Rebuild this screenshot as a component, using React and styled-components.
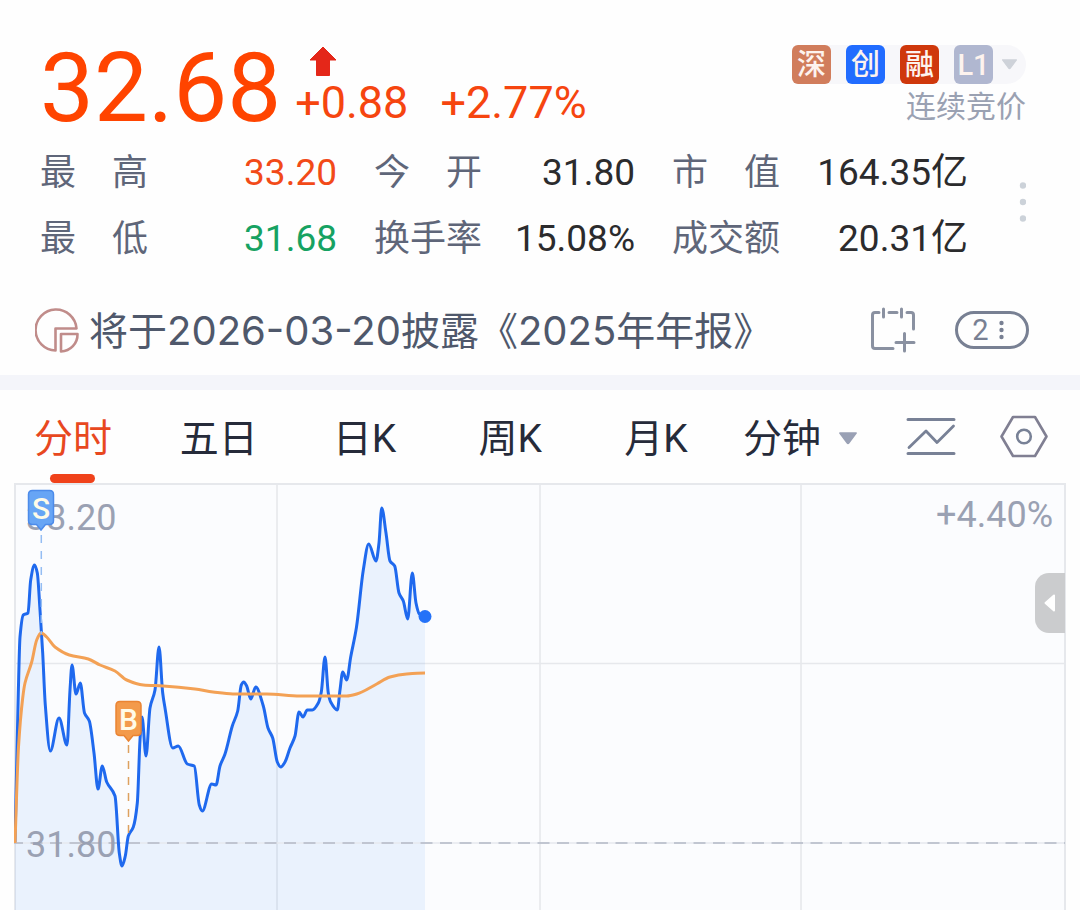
import styled, { createGlobalStyle } from 'styled-components'
import { useState } from 'react'

const GlobalStyle = createGlobalStyle`
* {
box-sizing: border-box;
}
body {
margin: 0;
background: #fefefe;
font-family: Roboto, "Noto Sans CJK SC", sans-serif;
color: #2b2b2d;
}
button, select {
margin: 0;
padding: 0;
border: none;
background: none;
font: inherit;
color: inherit;
cursor: pointer;
}
svg {
display: block;
}
`

const Quote = styled.header`
padding: 40px 54px 0 40px;
`
const PriceRow = styled.div`
display: flex;
height: 100px;
`
const Price = styled.div`
font-size: 96px;
line-height: 96px;
color: #ff4400;
`
const Changes = styled.div`
display: flex;
flex-direction: column;
margin-left: 14px;
padding-top: 6px;
`
const ChangeValues = styled.div`
display: flex;
gap: 32px;
font-size: 45px;
line-height: 50px;
color: #f6450f;
`
const ArrowBox = styled.div`
height: 32px;
padding-left: 13px;
`
const Market = styled.div`
display: flex;
flex-direction: column;
align-items: flex-end;
margin-left: auto;
padding-top: 5px;
`
const BadgeButton = styled.button`
display: flex;
align-items: center;
gap: 8px;
height: 39px;
padding-right: 8px;
border-radius: 6px 20px 20px 6px;
background: #f7f7fa;
`
const Badges = styled.span`
display: flex;
gap: 15px;
`
const Badge = styled.span`
width: 39px;
height: 39px;
border-radius: 6px;
background: ${props => props.$color};
color: #fdf3ee;
font-size: 29px;
font-weight: 500;
line-height: 41px;
text-align: center;
`
const Status = styled.div`
margin-top: 5px;
font-size: 30px;
line-height: 36px;
color: #9aa1b2;
`
const StatsRow = styled.div`
display: flex;
align-items: center;
justify-content: space-between;
`
const Stats = styled.dl`
display: grid;
grid-template-columns: 297fr 261fr 296fr;
column-gap: 37px;
flex: 1;
margin: 0 46px 0 0;
`
const Stat = styled.div`
display: flex;
justify-content: space-between;
font-size: 36px;
line-height: 66px;
white-space: nowrap;
`
const StatLabel = styled.dt`
color: #5f6679;
`
const StatValue = styled.dd`
margin: 0;
font-size: 37px;
color: ${props => props.$color || '#2b2b2d'};
`
const Notice = styled.div`
display: flex;
align-items: center;
height: 86px;
margin: 15px 0 2px;
padding: 0 51px 0 35px;
`
const NoticeLink = styled.a`
flex: 1;
margin-left: 9px;
padding-top: 2px;
font-family: Inter, "Noto Sans CJK SC", sans-serif;
font-size: 39px;
line-height: 48px;
white-space: nowrap;
text-decoration: none;
color: #4f586b;
`
const Digits = styled.span`
font-size: 40px;
`
const CountButton = styled.button`
display: flex;
align-items: center;
justify-content: center;
gap: 10px;
width: 74px;
height: 38px;
margin-left: 38px;
padding-right: 8px;
border: 3px solid #788093;
border-radius: 19px;
font-size: 29px;
line-height: 32px;
color: #788093;
`
const Divider = styled.div`
height: 15px;
background: #f4f5fa;
`
const Toolbar = styled.nav`
display: flex;
align-items: center;
height: 93px;
padding-right: 32px;
`
const Tabs = styled.div`
display: flex;
flex: 1;
height: 100%;
`
const Tab = styled.button`
position: relative;
flex: 1;
padding-top: 4px;
font-size: 39px;
line-height: 48px;
color: ${props => props.$active ? '#e8481f' : '#262b3a'};
&::after {
content: '';
display: ${props => props.$active ? 'block' : 'none'};
position: absolute;
left: 50%;
bottom: 0;
width: 45px;
height: 9px;
margin-left: -23px;
border-radius: 5px;
background: #f0421b;
}
`
const Period = styled.label`
display: flex;
align-items: center;
gap: 16px;
margin-left: 14px;
padding-top: 4px;
`
const PeriodSelect = styled.select`
appearance: none;
font-size: 39px;
line-height: 48px;
color: #262b3a;
`
const IconButton = styled.button`
margin-left: ${props => props.$gap || 0}px;
`
const ChartPanel = styled.section`
position: relative;
margin: 0 14px;
`
const ChartSvg = styled.svg`
width: 100%;
height: auto;
background: #fbfcfe;
`
const Handle = styled.button`
position: absolute;
top: 90px;
right: 1px;
display: flex;
align-items: center;
justify-content: center;
width: 30px;
height: 60px;
border-radius: 14px 0 0 14px;
background: #cbccce;
`

const badges = [
    { text: '深', color: '#d17d5c' },
    { text: '创', color: '#216cff' },
    { text: '融', color: '#cf380c' },
    { text: 'L1', color: '#b0b7d0' },
]

const stats = [
    { label: '最　高', value: '33.20', color: '#f24a18' },
    { label: '今　开', value: '31.80' },
    { label: '市　值', value: '164.35亿' },
    { label: '最　低', value: '31.68', color: '#16a262' },
    { label: '换手率', value: '15.08%' },
    { label: '成交额', value: '20.31亿' },
]

const tabs = ['分时', '五日', '日K', '周K', '月K']

const pricePoints = [
    [15, 842], [18.3, 693], [20, 637], [23.3, 615], [28, 613], [30.7, 580], [34.5, 565], [37.3, 573], [40, 610],
    [42.7, 653], [45.3, 705], [50.3, 751], [59, 718], [67, 745], [70, 690], [72, 665], [76, 694], [80.3, 683],
    [84.5, 713], [89.3, 721], [94, 753], [98, 789], [102.3, 766], [106.7, 782], [115, 796], [119.3, 853],
    [122, 866], [125.3, 856], [128.3, 836], [133.3, 827], [137.3, 803], [140, 740], [142, 717], [146, 756],
    [150, 708], [155, 690], [159, 647], [162.7, 693], [165, 708], [172.7, 748], [178.3, 746], [187.3, 764],
    [194.3, 766], [199.3, 805], [202.3, 811], [211.7, 784], [216, 785], [220, 766], [225, 754], [232.3, 726],
    [237.7, 711], [241.3, 685], [243.7, 682], [246.7, 686], [250.7, 699], [255.7, 687], [263.3, 706],
    [268, 728], [272.7, 738], [277.3, 762], [280.7, 767], [285, 762], [290, 748], [295, 736], [299, 712],
    [303, 717], [307.3, 710], [312.3, 710], [318.3, 703], [321.3, 692], [325, 657], [328.3, 693], [330.7, 702],
    [337.3, 710], [340, 690], [342.7, 672], [346.7, 680], [350.7, 657], [356.5, 627], [363.3, 570], [368.7, 544],
    [376, 561], [379, 543], [381.7, 508], [386, 533], [390, 561], [394.7, 566], [399, 593], [403.3, 601],
    [407.7, 619], [412.3, 573], [416, 603], [419.3, 614], [425, 617],
]

const averagePoints = [
    [15, 843], [18.5, 747], [22.7, 698], [25, 683], [31.7, 662], [36.7, 640], [41, 633], [46.7, 637], [55, 647],
    [69.3, 655], [88.3, 659], [100, 665], [115, 671], [126.7, 680], [143.3, 685], [163.3, 686], [195, 689],
    [213, 692], [233, 694], [266.7, 694], [300, 696], [346.7, 696], [356.7, 694], [376.7, 684], [390, 677],
    [406.7, 674], [425, 673],
]

// horizontal tangents at every turning point, so the line never overshoots
const toPath = (points) => {
    const slopes = points.map((p, i) => {
        if (i === 0 || i === points.length - 1) return 0
        const [x0, y0] = points[i - 1]
        const [x1, y1] = points[i + 1]
        const before = (p[1] - y0) / (p[0] - x0)
        const after = (y1 - p[1]) / (x1 - p[0])
        if (before * after <= 0) return 0
        return 2 * before * after / (before + after)
    })
    slopes[0] = (points[1][1] - points[0][1]) / (points[1][0] - points[0][0])
    return points.slice(1).reduce((path, [x, y], i) => {
        const [px, py] = points[i]
        const step = (x - px) / 3
        return `${path} C${px + step} ${py + slopes[i] * step} ${x - step} ${y - slopes[i + 1] * step} ${x} ${y}`
    }, `M${points[0][0]} ${points[0][1]}`)
}

function Caret({ width, height, color }) {
    return (
        <svg width={width} height={height} viewBox="0 0 18 12" aria-hidden="true">
            <path d="M1.5 1h15L9.800 10q-.8 1-1.600 0z" fill={color} stroke={color} strokeWidth="1.500" strokeLinejoin="round"/>
        </svg>
    )
}

function Marker({ x, y, letter, fill, edge }) {
    return (
        <g>
            <path
                d={`M${x - 8.5} ${y}h17q4 0 4 4v26q0 4 -4 4h-4l-4.500 5.500l-4.500 -5.500h-4q-4 0 -4 -4v-26q0 -4 4 -4z`}
                fill={fill} stroke={edge} strokeWidth="1.500"
            />
            <text x={x} y={y + 28} fontSize="30" fontWeight="500" fill="#fffbe8" textAnchor="middle">{letter}</text>
        </g>
    )
}

function Chart() {
    const line = toPath(pricePoints)
    return (
        <ChartSvg viewBox="14 483 1052 427" role="img" aria-label="分时">
            <g fill="none" stroke="#e6e8ec" strokeWidth="2">
                <path d="M277 484V910M540 484V910M801 484V910" strokeWidth="1.600"/>
                <path d="M14 663.500H1066" strokeWidth="1.500"/>
                <path d="M15 910V484H1065V910"/>
            </g>
            <path d={`${line} V910 H15 Z`} fill="#2a7cf4" fillOpacity="0.08"/>
            <path d="M15 843H1065" stroke="#e6e8ee" strokeWidth="1.500"/>
            <path d="M11 843H1065" stroke="#b4b9c6" strokeWidth="1.500" strokeDasharray="12 7.500"/>
            <g fontSize="36" fill="#9aa1b3">
                <text x="26" y="530">33.20</text>
                <text x="26" y="857">31.80</text>
                <text x="1053" y="527" textAnchor="end">+4.40%</text>
            </g>
            <path d={line} fill="none" stroke="#1f69ee" strokeWidth="3" strokeLinejoin="round"/>
            <path d={toPath(averagePoints)} fill="none" stroke="#f3a155" strokeWidth="3" strokeLinejoin="round"/>
            <path d="M41.300 535V634" stroke="#94bdf3" strokeWidth="1.500" strokeDasharray="8 8"/>
            <path d="M128.500 745V834" stroke="#dda15f" strokeWidth="1.500" strokeDasharray="8 8"/>
            <Marker x={41} y={490.5} letter="S" fill="#67a5f5" edge="#4c8bea"/>
            <Marker x={128.5} y={701.5} letter="B" fill="#f39a4b" edge="#ea8433"/>
            <circle cx="425" cy="616.500" r="6.500" fill="#2472f8"/>
        </ChartSvg>
    )
}

function App() {

const [active, setActive] = useState('分时')

    return (
        <>
            <GlobalStyle/>
            <Quote>
                <PriceRow>
                    <Price>32.68</Price>
                    <Changes>
                        <ArrowBox>
                            <svg width="30" height="32" viewBox="0 0 30 32" aria-hidden="true">
                                <path d="M15 1L28 14H21.500V29.500H8.500V14H2z" fill="#e42719" stroke="#e42719" strokeLinejoin="round"/>
                            </svg>
                        </ArrowBox>
                        <ChangeValues>
                            <span>+0.88</span>
                            <span>+2.77%</span>
                        </ChangeValues>
                    </Changes>
                    <Market>
                        <BadgeButton>
                            <Badges>
                                {badges.map(b => <Badge key={b.text} $color={b.color}>{b.text}</Badge>)}
                            </Badges>
                            <Caret width={17} height={11} color="#ced2d9"/>
                        </BadgeButton>
                        <Status>连续竞价</Status>
                    </Market>
                </PriceRow>
                <StatsRow>
                    <Stats>
                        {stats.map(s => (
                            <Stat key={s.label}>
                                <StatLabel>{s.label}</StatLabel>
                                <StatValue $color={s.color}>{s.value}</StatValue>
                            </Stat>
                        ))}
                    </Stats>
                    <IconButton aria-label="更多">
                        <svg width="12" height="48" viewBox="0 0 12 48" fill="#ccd2d9">
                            <circle cx="9" cy="3.500" r="3.200"/>
                            <circle cx="9" cy="20" r="3.200"/>
                            <circle cx="9" cy="36.500" r="3.200"/>
                        </svg>
                    </IconButton>
                </StatsRow>
            </Quote>
            <Notice>
                <svg width="45" height="46" viewBox="0 0 45 46" fill="none" stroke="#c08c8a" strokeWidth="2.600" strokeLinejoin="round" aria-hidden="true">
                    <path d="M20.500 43.500A20.500 20.500 0 1 1 41.500 21.500H20.500z"/>
                    <path d="M26 27H42.500A17 17 0 0 1 26 44.500z"/>
                </svg>
                <NoticeLink href="#report">
                    将于<Digits>2026-03-20</Digits>披露《<Digits>2025</Digits>年年报》
                </NoticeLink>
                <IconButton aria-label="添加提醒">
                    <svg width="47" height="48" viewBox="0 0 47 48" fill="none" stroke="#8a91a1" strokeWidth="3" strokeLinecap="round">
                        <path d="M23 42.500H5Q2.500 42.500 2.500 40V9Q2.500 6.500 5 6.500H9M19 6.500H27M37 6.500H41Q43.500 6.500 43.500 9V23"/>
                        <path d="M13.500 3V11M31.500 3V11M34.500 27.500V45M26 36.500H44"/>
                    </svg>
                </IconButton>
                <CountButton>
                    2
                    <svg width="5" height="20" viewBox="0 0 5 20" fill="#788093" aria-hidden="true">
                        <circle cx="2.500" cy="3" r="2.200"/>
                        <circle cx="2.500" cy="10" r="2.200"/>
                        <circle cx="2.500" cy="17" r="2.200"/>
                    </svg>
                </CountButton>
            </Notice>
            <Divider/>
            <Toolbar>
                <Tabs>
                    {tabs.map(t => (
                        <Tab key={t} $active={t === active} onClick={() => setActive(t)}>{t}</Tab>
                    ))}
                </Tabs>
                <Period>
                    <PeriodSelect aria-label="分钟">
                        <option>分钟</option>
                    </PeriodSelect>
                    <Caret width={20} height={13} color="#9aa1b5"/>
                </Period>
                <IconButton $gap={48} aria-label="指标">
                    <svg width="50" height="40" viewBox="0 0 50 40" fill="none" stroke="#788196" strokeWidth="3" strokeLinecap="round" strokeLinejoin="round">
                        <path d="M2 2.500H48M2 36.500H48"/>
                        <path d="M3 30.500L20 14L31 25.500L47.500 9" strokeWidth="2.800"/>
                    </svg>
                </IconButton>
                <IconButton $gap={44} aria-label="设置">
                    <svg width="48" height="44" viewBox="0 0 48 44" fill="none" stroke="#807f92" strokeWidth="2.600" strokeLinejoin="round">
                        <path d="M13 2H35L46.500 21.500L35 41H13L1.500 21.500z"/>
                        <circle cx="24" cy="21.500" r="6.800" stroke="#788196"/>
                    </svg>
                </IconButton>
            </Toolbar>
            <ChartPanel>
                <Chart/>
                <Handle aria-label="展开">
                    <svg width="12" height="20" viewBox="0 0 12 20" aria-hidden="true">
                        <path d="M10 2.500V17.500L1.500 10z" fill="#fff" stroke="#fff" strokeWidth="2" strokeLinejoin="round"/>
                    </svg>
                </Handle>
            </ChartPanel>
        </>
    )
}

export default App
